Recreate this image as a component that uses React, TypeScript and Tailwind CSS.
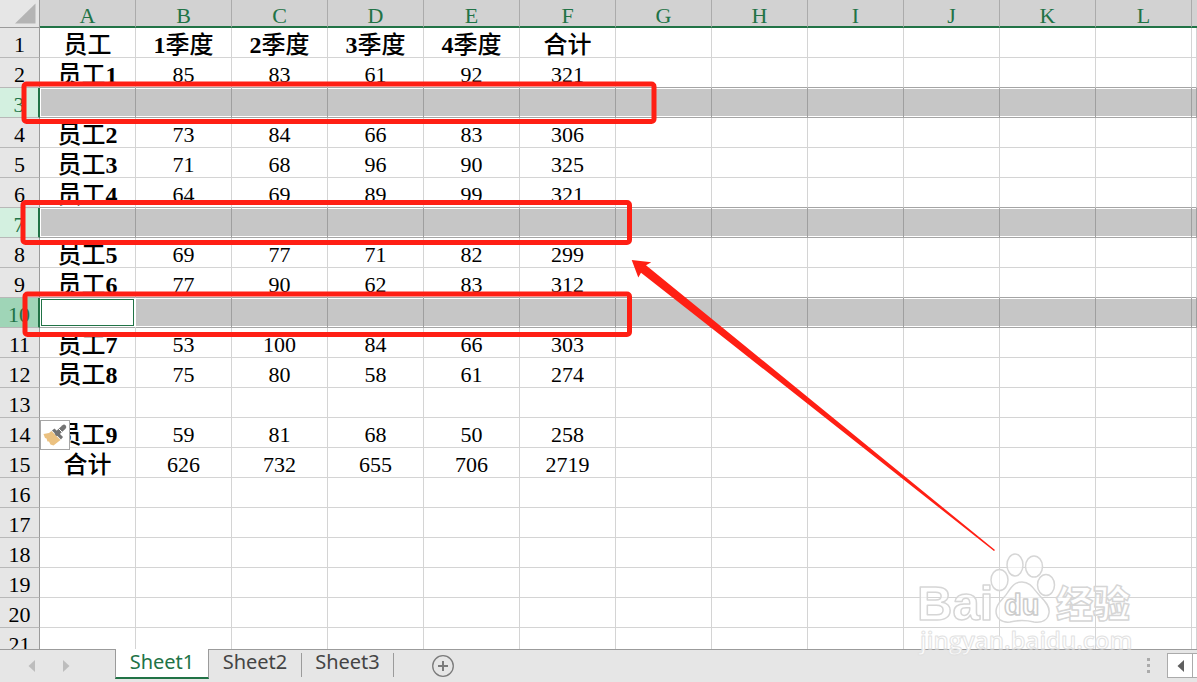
import React from "react";

const COLUMNS = ["A", "B", "C", "D", "E", "F", "G", "H", "I", "J", "K", "L"];

const DATA: Record<number, string[]> = {
  1: ["员工", "1季度", "2季度", "3季度", "4季度", "合计"],
  2: ["员工1", "85", "83", "61", "92", "321"],
  4: ["员工2", "73", "84", "66", "83", "306"],
  5: ["员工3", "71", "68", "96", "90", "325"],
  6: ["员工4", "64", "69", "89", "99", "321"],
  8: ["员工5", "69", "77", "71", "82", "299"],
  9: ["员工6", "77", "90", "62", "83", "312"],
  11: ["员工7", "53", "100", "84", "66", "303"],
  12: ["员工8", "75", "80", "58", "61", "274"],
  14: ["员工9", "59", "81", "68", "50", "258"],
  15: ["合计", "626", "732", "655", "706", "2719"],
};

const SELECTED = [3, 7, 10];
const ACTIVE_ROW = 10;
const ROWS = Array.from({ length: 21 }, (_, i) => i + 1);

/** Heading text: digits in bold, Chinese characters in a lighter weight. */
function Heading({ text }: { text: string }) {
  return (
    <>
      {text
        .split(/(\d+)/)
        .filter(Boolean)
        .map((part, i) => (
          <span key={i} className={/\d/.test(part) ? "font-bold" : "font-medium"}>
            {part}
          </span>
        ))}
    </>
  );
}

function RowHeader({ row }: { row: number }) {
  const base =
    "h-[30px] border-b p-0 pt-[5px] text-center text-[22px] leading-6 font-normal";
  let tone = "border-r border-b-[#b8b8b8] border-r-[#9b9b9b] bg-[#e6e6e6] text-black";
  if (row === ACTIVE_ROW) {
    tone = "border-r-2 border-b-[#b8b8b8] border-r-[#217346] bg-[#9fd5b7] text-[#217346]";
  } else if (SELECTED.includes(row)) {
    tone = "border-r-2 border-b-[#b8b8b8] border-r-[#217346] bg-[#d3f0e0] text-[#217346]";
  }
  return (
    <th scope="row" className={`${base} ${tone}`}>
      {row}
    </th>
  );
}

function Cell({ row, col }: { row: number; col: number }) {
  const selected = SELECTED.includes(row);
  const text = DATA[row]?.[col] ?? "";
  const bold = row === 1 || col === 0;

  if (row === ACTIVE_ROW && col === 0) {
    return (
      <td className="h-[30px] border-r border-b border-r-white border-b-[#a5a5a5] bg-white p-px">
        <div className="h-[27px] border border-[#217346]" />
      </td>
    );
  }

  let tone = "border-r-[#d4d4d4] border-b-[#d4d4d4]";
  if (selected && col === 0) {
    tone =
      "border-r-[#9f9f9f] border-b-[#a5a5a5] bg-[#c6c6c6] shadow-[inset_1px_1px_0_white,inset_0_-1px_0_white]";
  } else if (selected) {
    tone =
      "border-r-[#9f9f9f] border-b-[#a5a5a5] bg-[#c6c6c6] shadow-[inset_0_1px_0_white,inset_0_-1px_0_white]";
  } else if (SELECTED.includes(row + 1)) {
    tone = "border-r-[#d4d4d4] border-b-[#a5a5a5]";
  }
  const type = bold ? "pt-1 text-2xl leading-6" : "pt-1 text-[22px] leading-6";
  return (
    <td className={`h-[30px] border-r border-b px-0 pb-0 text-center whitespace-nowrap ${tone} ${type}`}>
      {bold ? <Heading text={text} /> : text}
    </td>
  );
}

function Grid() {
  return (
    <table className="w-full table-fixed border-separate border-spacing-0 font-['Liberation_Serif','Noto_Sans_CJK_SC',serif] text-black">
      <colgroup>
        <col className="w-10" />
        {COLUMNS.map((c) => (
          <col key={c} className="w-24" />
        ))}
        <col />
      </colgroup>
      <thead>
        <tr>
          <th className="h-7 border-r border-b border-[#9b9b9b] bg-[#e6e6e6] p-0 pr-[3px]">
            <svg className="ml-auto block" width="21" height="21" viewBox="0 0 21 21" aria-hidden="true">
              <path d="M20.5 0.500V20.5H0Z" fill="#b4b4b4" />
            </svg>
          </th>
          {COLUMNS.map((c) => (
            <th
              key={c}
              scope="col"
              className="h-7 border-r border-b-2 border-r-[#ababab] border-b-[#217346] bg-[#d2d2d2] p-0 pt-[5px] text-[22px] leading-5 font-normal text-[#217346]"
            >
              {c}
            </th>
          ))}
          <th className="h-7 border-b-2 border-b-[#217346] bg-[#d2d2d2] p-0" />
        </tr>
      </thead>
      <tbody>
        {ROWS.map((row) => (
          <tr key={row}>
            <RowHeader row={row} />
            {COLUMNS.map((c, i) => (
              <Cell key={c} row={row} col={i} />
            ))}
            <Cell row={row} col={COLUMNS.length} />
          </tr>
        ))}
      </tbody>
    </table>
  );
}

function PasteOptions() {
  return (
    <button
      type="button"
      aria-label="Paste options"
      className="absolute top-[420px] left-10 flex size-[30px] items-center justify-center border border-[#a6a6a6] bg-white"
    >
      <svg className="shrink-0" width="28" height="28" viewBox="0 0 28 28" aria-hidden="true">
        <path d="M2.500 13L8 12L10.500 10L19.500 19L12.500 24.500L9.500 23.500L8 20.500L6.500 20.500L5.500 17.500L4 17Z" fill="#ebc180" />
        <path d="M11 10.500L14.500 8L17.500 10L19 8.500L20.500 9L24.500 5.500M20.500 9" fill="none" />
        <path d="M11 9.500L13.500 7.500L22 16L20 18.500Z" fill="#737373" />
        <path d="M16 12.500L23 6" stroke="#737373" strokeWidth="4.500" strokeLinecap="round" />
        <path d="M17.500 7.500L21 11" stroke="white" strokeWidth="1" />
      </svg>
    </button>
  );
}

function Annotations() {
  return (
    <svg className="pointer-events-none absolute top-0 left-0" width="1197" height="682" viewBox="0 0 1197 682" aria-hidden="true">
      <g fill="none" stroke="#ff1f14" strokeWidth="5">
        <rect x="24" y="84" width="630" height="37.500" rx="2.500" />
        <rect x="23" y="202.500" width="606.500" height="40" rx="2.500" />
        <rect x="25" y="294" width="604.500" height="40.500" rx="2.500" />
      </g>
      <path d="M631.700 260L651.300 262.300L646 265.300L737.700 340L995 550L994 551L726.700 340L641 272.700L638.300 277.500Z" fill="#ff1f14" />
    </svg>
  );
}

function Watermark() {
  return (
    <svg
      className="pointer-events-none absolute top-[545px] left-[910px]"
      width="232"
      height="118"
      viewBox="910 545 232 118"
      role="img"
      aria-label="Baidu"
    >
      <g fill="white" fillOpacity="0.6" stroke="#d6d6d6" strokeWidth="1.500" strokeLinejoin="round">
        <ellipse cx="999.500" cy="580" rx="8.500" ry="10.500" />
        <ellipse cx="1015" cy="565" rx="8" ry="11" />
        <ellipse cx="1034" cy="566.500" rx="8.500" ry="10.500" />
        <ellipse cx="1046" cy="585" rx="8.500" ry="10.500" />
        <path d="M1022 582C1031 582 1034 590 1040 596C1046 602 1050 607 1049 613C1048 620 1042 623 1034 622C1026 620 1018 620 1010 622C1001 623 996 618 996 611C996 603 1004 599 1008 592C1012 586 1015 582 1022 582Z" />
        <text x="917" y="620" fontFamily="Liberation Sans, sans-serif" fontWeight="bold" fontSize="49">Bai</text>
        <text x="1004" y="615" fontFamily="Liberation Sans, sans-serif" fontWeight="bold" fontSize="29" stroke="#cccccc">du</text>
        <text x="1056" y="618" fontFamily="Noto Sans CJK SC, sans-serif" fontWeight="900" fontSize="37">经验</text>
        <text x="920" y="649" fontFamily="Open Sans, sans-serif" fontWeight="600" fontSize="24" strokeWidth="1" fillOpacity="0.9" stroke="#e2e2e2">jingyan.baidu.com</text>
      </g>
    </svg>
  );
}

function TabBar() {
  return (
    <footer className="flex h-[33px] shrink-0 items-start border-t border-[#9b9b9b] bg-[#e6e6e6] font-['Noto_Sans',sans-serif] text-xl leading-6 text-[#444]">
      <div className="flex h-8 w-[115px] shrink-0 items-center gap-7 pl-7">
        <button type="button" aria-label="Previous sheet">
          <svg className="block" width="7" height="12" viewBox="0 0 7 12"><path d="M7 0V12L0.500 6Z" fill="#bdbdbd" /></svg>
        </button>
        <button type="button" aria-label="Next sheet">
          <svg className="block" width="7" height="12" viewBox="0 0 7 12"><path d="M0 0V12L6.500 6Z" fill="#bdbdbd" /></svg>
        </button>
      </div>
      <nav className="flex items-start">
        <button type="button" className="-mt-px h-[30px] w-[94px] border-x border-b-2 border-x-[#9b9b9b] border-b-[#217346] bg-white pb-0.5 text-[#217346]">
          Sheet1
        </button>
        <button type="button" className="mt-[3px] h-6 w-[93px] border-r border-[#9b9b9b] pb-1.5 leading-[18px]">
          Sheet2
        </button>
        <button type="button" className="mt-[3px] h-6 w-[92px] border-r border-[#9b9b9b] pb-1.5 leading-[18px]">
          Sheet3
        </button>
      </nav>
      <button type="button" aria-label="New sheet" className="mt-1 ml-[37px]">
        <svg className="block" width="24" height="24" viewBox="0 0 24 24" fill="none" stroke="#7b7b7b">
          <circle cx="12" cy="12" r="10.300" strokeWidth="1.300" />
          <path d="M12 7V17M7 12H17" strokeWidth="2" />
        </svg>
      </button>
      <div className="ml-auto flex shrink-0 items-center pt-[3px]">
        <svg className="mr-[17px] block" width="3" height="16" viewBox="0 0 3 16" fill="#ababab" aria-hidden="true">
          <path d="M0 0H3V3H0ZM0 6H3V9H0ZM0 12H3V15H0Z" />
        </svg>
        <button type="button" aria-label="Scroll left" className="flex h-[25px] w-[26px] items-center justify-center border border-[#ababab] bg-white">
          <svg width="7" height="12" viewBox="0 0 7 12"><path d="M7 0V12L0.500 6Z" fill="#5f5f5f" /></svg>
        </button>
        <div className="h-[25px] w-1 border-y border-[#ababab] bg-white" />
      </div>
    </footer>
  );
}

export default function App() {
  return (
    <div className="relative flex h-screen flex-col overflow-hidden bg-white">
      <main className="relative min-h-0 flex-1 overflow-hidden">
        <Grid />
        <PasteOptions />
      </main>
      <TabBar />
      <Annotations />
      <Watermark />
    </div>
  );
}
